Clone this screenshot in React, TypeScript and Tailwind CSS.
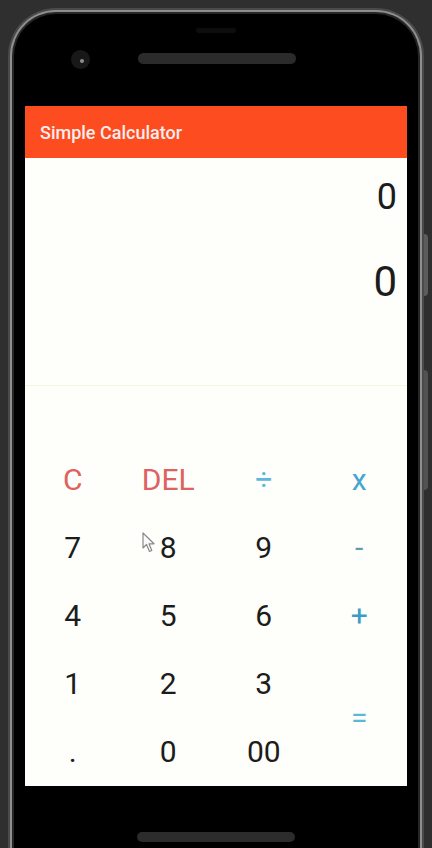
import React from 'react'

const keys: Array<{ label: string; color: string; span?: boolean }> = [
  { label: 'C', color: 'text-[#dd6262]' },
  { label: 'DEL', color: 'text-[#dd6262]' },
  { label: '÷', color: 'text-[#5cb6de]' },
  { label: 'x', color: 'text-[#45a5d5]' },
  { label: '7', color: 'text-[#1c1c1c]' },
  { label: '8', color: 'text-[#1c1c1c]' },
  { label: '9', color: 'text-[#1c1c1c]' },
  { label: '-', color: 'text-[#5f9ea6]' },
  { label: '4', color: 'text-[#1c1c1c]' },
  { label: '5', color: 'text-[#1c1c1c]' },
  { label: '6', color: 'text-[#1c1c1c]' },
  { label: '+', color: 'text-[#3a9ec4]' },
  { label: '1', color: 'text-[#1c1c1c]' },
  { label: '2', color: 'text-[#1c1c1c]' },
  { label: '3', color: 'text-[#1c1c1c]' },
  { label: '=', color: 'text-[#5ab7d8]', span: true },
  { label: '.', color: 'text-[#1c1c1c]' },
  { label: '0', color: 'text-[#1c1c1c]' },
  { label: '00', color: 'text-[#1c1c1c]' },
]

export default function App() {
  return (
    <div className="relative w-[432px] h-[848px] overflow-hidden bg-[#2f2f2f] font-['Roboto',sans-serif]">
      {/* 机身外框 */}
      <div className="ml-[8px] mt-[8px] w-[416px] h-[860px] rounded-t-[48px] bg-[#4a4a4a] p-[2px]">
        <div className="h-full rounded-t-[46px] bg-[#8e8e8e] p-[2px]">
          <div className="h-full rounded-t-[44px] bg-[#262626] p-[2px]">
            <div className="h-full rounded-t-[42px] bg-black px-[11px] flex flex-col">
              {/* 顶部：传感器、摄像头、听筒 */}
              <div className="h-[92px] flex flex-col">
                <div className="mx-auto mt-[14px] w-[40px] h-[5px] rounded-full bg-[#0d0d0d]" />
                <div className="mt-[17px] flex items-start">
                  <div className="ml-[46px] w-[19px] h-[19px] rounded-full bg-[#181818] flex items-center justify-center">
                    <div className="w-[4px] h-[4px] rounded-full bg-[#8f8f8f] translate-x-[1px] translate-y-[1px]" />
                  </div>
                  <div className="ml-[48px] mt-[3px] w-[158px] h-[11px] rounded-full bg-[#2b2b2b]" />
                </div>
              </div>

              {/* 屏幕 */}
              <div className="h-[680px] bg-[#fefefb] flex flex-col">
                <div className="h-[52px] bg-[#fd4c20] px-[15px] flex items-center">
                  <span className="text-[18px] font-medium text-[#fbeeee]">Simple Calculator</span>
                </div>

                {/* 显示区 */}
                <div className="h-[228px] border-b border-[#f7f5dc] flex flex-col items-end pr-[10px]">
                  <div className="mt-[21px] text-[36px] leading-none text-[#1c1c1c]">0</div>
                  <div className="mt-[46px] text-[42px] leading-none text-[#1c1c1c]">0</div>
                </div>

                {/* 按键 */}
                <div className="relative mt-[60px] grid grid-cols-4 grid-rows-[repeat(5,68px)]">
                  {keys.map((k) => (
                    <div
                      key={k.label}
                      className={`flex items-center justify-center text-[30px] leading-none ${k.color} ${
                        k.span ? 'row-span-2 col-start-4 row-start-4' : ''
                      }`}
                    >
                      {k.label}
                    </div>
                  ))}
                  {/* 鼠标指针 */}
                  <svg
                    className="absolute left-[117px] top-[86px]"
                    width="14"
                    height="21"
                    viewBox="0 0 14 21"
                  >
                    <path
                      d="M1 1 L1 16 L4.5 12.5 L7.5 19.5 L9.8 18.5 L7 11.8 L12 11.8 Z"
                      fill="#fafafa"
                      stroke="#8a8a8a"
                      strokeWidth="1.2"
                      strokeLinejoin="round"
                    />
                  </svg>
                </div>
              </div>

              {/* 底部手势条 */}
              <div className="mt-[46px] mx-auto w-[158px] h-[10px] rounded-full bg-[#2c2c2c]" />
            </div>
          </div>
        </div>
      </div>

      {/* 侧边按键 */}
      <div className="absolute left-[424px] top-[234px] w-[4px] h-[62px] rounded-r bg-[#5c5c5c]" />
      <div className="absolute left-[424px] top-[370px] w-[4px] h-[120px] rounded-r bg-[#525252]" />
    </div>
  )
}
